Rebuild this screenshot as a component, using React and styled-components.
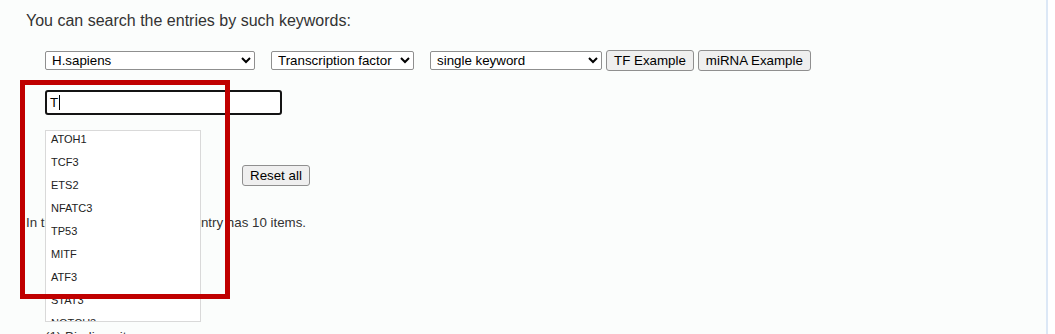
import React from "react";
import styled, { createGlobalStyle } from "styled-components";

const GlobalStyle = createGlobalStyle`
  html, body {
    margin: 0;
    padding: 0;
    background: #ffffff;
    font-family: "Liberation Sans", Arial, sans-serif;
    overflow: hidden;
  }
`;

const Page = styled.div`
  position: relative;
  width: 1048px;
  height: 334px;
  background: #fbfdfc;
  border-right: 2px solid #dce8f6;
  padding-left: 26px;
  box-sizing: border-box;
  color: #333333;
  overflow: hidden;
`;

const Heading = styled.div`
  padding-top: 12px;
  font-size: 16px;
  line-height: 18px;
`;

const Row = styled.div`
  display: flex;
  align-items: center;
  padding-left: 19px;
  margin-top: ${(p) => p.$top || 0}px;
`;

const Select = styled.select`
  width: ${(p) => p.$w}px;
  height: 19px;
  margin-right: ${(p) => p.$gap || 0}px;
  font-family: "Liberation Sans", Arial, sans-serif;
  font-size: 13.33px;
  color: #000;
  background: #fff;
  border: 1px solid #8f8f8f;
  border-radius: 2px;
  padding: 0 0 0 2px;
  box-sizing: border-box;
`;

const Button = styled.button`
  height: 21px;
  margin-right: 4px;
  margin-left: ${(p) => p.$left || 0}px;
  padding: 2px 7px;
  font-family: "Liberation Sans", Arial, sans-serif;
  font-size: 13.33px;
  line-height: 15px;
  color: #000;
  background: #efefef;
  border: 1px solid #8f8f8f;
  border-radius: 3px;
  box-sizing: border-box;
`;

const Field = styled.div`
  position: relative;
  width: 237px;
  height: 25px;
  box-sizing: border-box;
  border: 2px solid #141414;
  border-radius: 3px;
  background: #fff;
  padding: 0 3px;
  display: flex;
  align-items: center;
  font-size: 13.33px;
  color: #000;
`;

const Caret = styled.span`
  display: inline-block;
  width: 1px;
  height: 15px;
  background: #000;
  margin-left: 1px;
`;

const Suggestions = styled.ul`
  position: absolute;
  left: 45px;
  top: 130px;
  width: 156px;
  height: 192px;
  margin: 0;
  padding: 0;
  list-style: none;
  background: #fff;
  border: 1px solid #d9d9d9;
  box-sizing: border-box;
  overflow: hidden;
  z-index: 2;
`;

const Suggestion = styled.li`
  height: 23px;
  padding: 2px 5px 8px;
  box-sizing: border-box;
  font-size: 11px;
  line-height: 13px;
  color: #222;
`;

const Info = styled.div`
  margin-top: 29px;
  font-size: 13.33px;
  line-height: 15px;
`;

const Note = styled.div`
  margin-top: 99px;
  padding-left: 19px;
  font-size: 13.33px;
  line-height: 15px;
`;

const Highlight = styled.div`
  position: absolute;
  left: 20px;
  top: 80px;
  width: 210px;
  height: 219px;
  border: 5px solid #c00000;
  box-sizing: border-box;
  z-index: 3;
  pointer-events: none;
`;

const genes = ["ATOH1", "TCF3", "ETS2", "NFATC3", "TP53", "MITF", "ATF3", "STAT3", "NOTCH3"];

export default function App() {
  return (
    <>
      <GlobalStyle />
      <Page>
        <Heading>You can search the entries by such keywords:</Heading>
        <Row $top={20}>
          <Select $w={210} $gap={16} defaultValue="hs">
            <option value="hs">H.sapiens</option>
          </Select>
          <Select $w={143} $gap={16} defaultValue="tf">
            <option value="tf">Transcription factor</option>
          </Select>
          <Select $w={172} $gap={4} defaultValue="single">
            <option value="single">single keyword</option>
          </Select>
          <Button>TF Example</Button>
          <Button>miRNA Example</Button>
        </Row>
        <Row $top={19}>
          <Field>
            T<Caret />
          </Field>
        </Row>
        <Row $top={50}>
          <Button $left={197}>Reset all</Button>
        </Row>
        <Info>In this database, each gene entry has 10 items.</Info>
        <Note>(1) Binding sites</Note>
        <Suggestions>
          {genes.map((g) => (
            <Suggestion key={g}>{g}</Suggestion>
          ))}
        </Suggestions>
        <Highlight />
      </Page>
    </>
  );
}
